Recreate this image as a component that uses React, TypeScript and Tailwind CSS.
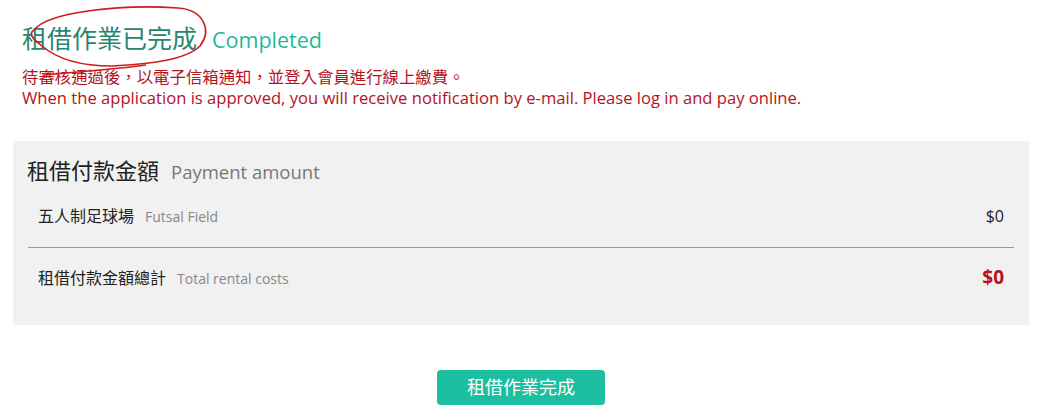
const font = { fontFamily: '"Open Sans", "Noto Sans CJK TC", sans-serif' };

// Red hand-drawn annotation around the heading.
const Scribble = () => (
  <svg className="pointer-events-none absolute left-0 top-0" width="240" height="90" viewBox="0 0 240 90" fill="none">
    <path
      d="M34 30 C 48 12, 120 4, 178 8 C 204 10, 212 30, 200 46 C 186 60, 150 64, 112 66 C 80 66, 56 58, 42 46 C 32 38, 28 34, 34 30"
      stroke="#d11a1a"
      strokeWidth="1.6"
    />
    <path d="M146 65 C 118 69, 76 72, 44 75" stroke="#d11a1a" strokeWidth="1.6" />
  </svg>
);

const Row = ({ zh, en, amount, total }: { zh: string; en: string; amount: string; total?: boolean }) => (
  <div className="flex items-center justify-between px-[25px]">
    <div className="flex items-baseline gap-[11px]">
      <span className="text-[16px] text-[#222]">{zh}</span>
      <span className="text-[14px] text-[#888]">{en}</span>
    </div>
    {total ? (
      <span className="text-[19px] font-bold text-[#b5121b]">{amount}</span>
    ) : (
      <span className="text-[16px] text-[#222]">{amount}</span>
    )}
  </div>
);

export default function App() {
  return (
    <div className="relative h-[420px] w-[1050px] overflow-hidden bg-white" style={font}>
      <div className="px-[22px] pt-[22px]">
        <div className="flex items-baseline gap-[15px]">
          <h1 className="text-[25px] leading-[32px] text-[#26866f]">租借作業已完成</h1>
          <span className="text-[21.5px] text-[#1fb89a]">Completed</span>
        </div>
        <div className="mt-[10px] leading-[21px] text-[#b5121b]">
          <p className="text-[16.4px]">待審核通過後，以電子信箱通知，並登入會員進行線上繳費。</p>
          <p className="text-[16.6px]">When the application is approved, you will receive notification by e-mail. Please log in and pay online.</p>
        </div>
      </div>

      <div className="mx-[13px] mt-[33px] h-[184px] w-[1016px] bg-[#f1f1f1] pt-[13px]">
        <div className="flex items-baseline gap-[12px] px-[14px]">
          <span className="text-[22px] text-[#222]">租借付款金額</span>
          <span className="text-[18.5px] text-[#777]">Payment amount</span>
        </div>
        <div className="mt-[17px]">
          <Row zh="五人制足球場" en="Futsal Field" amount="$0" />
        </div>
        <div className="mx-[15px] mt-[19px] border-t border-[#999]" />
        <div className="mt-[15px]">
          <Row zh="租借付款金額總計" en="Total rental costs" amount="$0" total />
        </div>
      </div>

      <div className="mt-[45px] flex justify-center">
        <button className="ml-[-8px] h-[35px] w-[168px] rounded-[4px] bg-[#1bbf9f] text-[18px] text-white">
          租借作業完成
        </button>
      </div>

      <Scribble />
    </div>
  );
}
